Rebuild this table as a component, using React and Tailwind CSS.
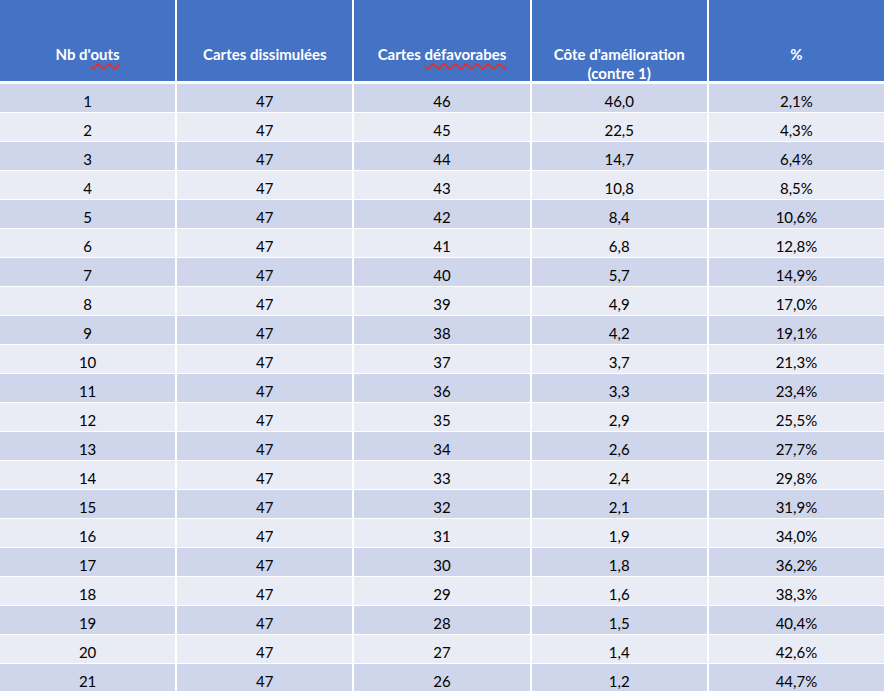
import React from "react";

const rows = [
  [1, 47, 46, "46,0", "2,1%"],
  [2, 47, 45, "22,5", "4,3%"],
  [3, 47, 44, "14,7", "6,4%"],
  [4, 47, 43, "10,8", "8,5%"],
  [5, 47, 42, "8,4", "10,6%"],
  [6, 47, 41, "6,8", "12,8%"],
  [7, 47, 40, "5,7", "14,9%"],
  [8, 47, 39, "4,9", "17,0%"],
  [9, 47, 38, "4,2", "19,1%"],
  [10, 47, 37, "3,7", "21,3%"],
  [11, 47, 36, "3,3", "23,4%"],
  [12, 47, 35, "2,9", "25,5%"],
  [13, 47, 34, "2,6", "27,7%"],
  [14, 47, 33, "2,4", "29,8%"],
  [15, 47, 32, "2,1", "31,9%"],
  [16, 47, 31, "1,9", "34,0%"],
  [17, 47, 30, "1,8", "36,2%"],
  [18, 47, 29, "1,6", "38,3%"],
  [19, 47, 28, "1,5", "40,4%"],
  [20, 47, 27, "1,4", "42,6%"],
  [21, 47, 26, "1,2", "44,7%"],
];

// red squiggle for the spell-check marks
const Typo = ({ children }) => (
  <span className="underline decoration-wavy decoration-[#e0302c] decoration-[1.5px] underline-offset-[3px]">
    {children}
  </span>
);

const headers = [
  <>
    Nb d'<Typo>outs</Typo>
  </>,
  "Cartes dissimulées",
  <>
    Cartes <Typo>défavorabes</Typo>
  </>,
  <>
    Côte d'amélioration
    <br />
    (contre 1)
  </>,
  "%",
];

export default function App() {
  return (
    <div
      className="w-[884px] h-[691px] overflow-hidden bg-white text-[15px]"
      style={{ fontFamily: "Lato, 'Open Sans', sans-serif" }}
    >
      <div className="grid grid-cols-5 gap-x-[2px] mb-[3px]">
        {headers.map((h, i) => (
          <div
            key={i}
            className="h-[81px] bg-[#4472C4] text-white font-bold text-center pt-[45px] leading-[19px]"
          >
            {h}
          </div>
        ))}
      </div>
      <div className="flex flex-col gap-px">
        {rows.map((r, i) => (
          <div key={i} className="grid grid-cols-5 gap-x-[2px]">
            {r.map((c, j) => (
              <div
                key={j}
                className={`h-[28px] pt-[6px] leading-[22px] text-center text-black ${
                  i % 2 === 0 ? "bg-[#CFD5EA]" : "bg-[#E9EBF5]"
                }`}
              >
                {c}
              </div>
            ))}
          </div>
        ))}
      </div>
    </div>
  );
}
